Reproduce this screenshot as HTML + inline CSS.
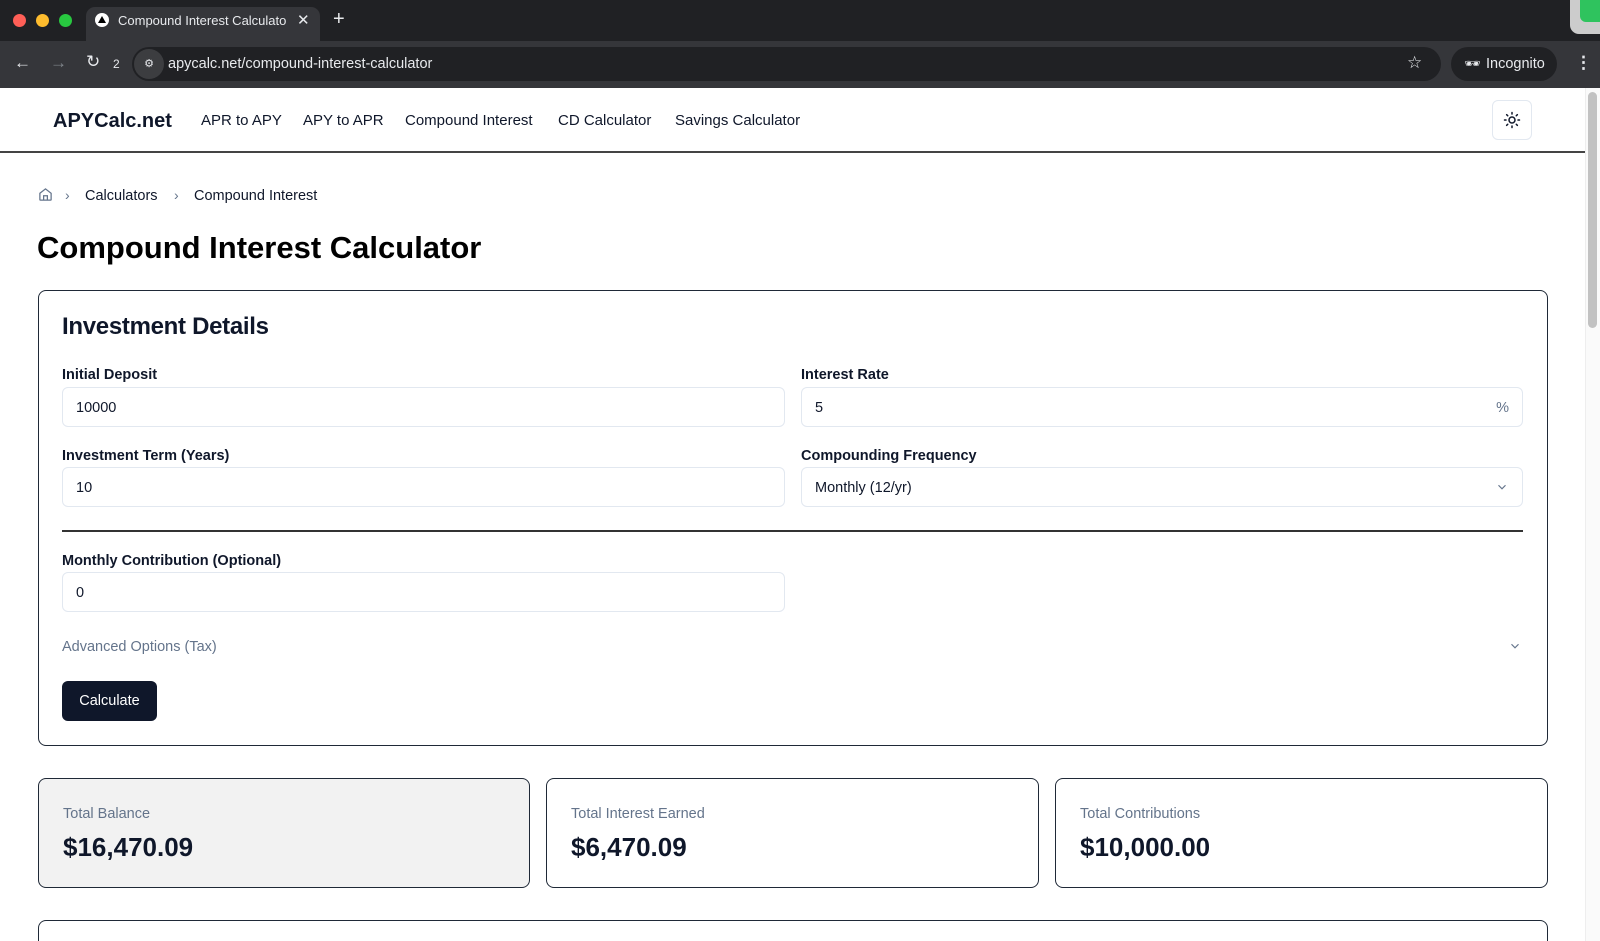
<!DOCTYPE html>
<html style="height:941px;overflow:hidden"><head><meta charset="utf-8"><style>
*{box-sizing:border-box;margin:0;padding:0}
html,body{width:1600px;height:941px;overflow:hidden}
body{background:#fff;font-family:"Liberation Sans",Arial,sans-serif;position:relative;color:#0b1120}
.a{position:absolute}
.tabbar{left:0;top:0;width:1600px;height:41px;background:#202124}
.toolbar{left:0;top:41px;width:1600px;height:47px;background:#35363a}
.lbl{font-size:14.5px;font-weight:600;color:#0f172a}
.inp{border:1px solid #e2e8f0;border-radius:6px;height:40px;font-size:14.5px;padding:12px 13px;color:#0f172a}
.stat{border:1px solid #1f2937;border-radius:8px;height:110px;top:778px}
.stat .l{position:absolute;left:24px;top:27px;font-size:14.5px;color:#64748b}
.stat .v{position:absolute;left:24px;top:53px;font-size:26px;font-weight:bold;color:#0f172a}
.nav{top:112px;font-size:15px;color:#0f172a;font-weight:500}
</style></head><body>
<div class="a tabbar"></div>
<div class="a" style="left:13px;top:14px;width:13px;height:13px;border-radius:50%;background:#ff5f57"></div>
<div class="a" style="left:36px;top:14px;width:13px;height:13px;border-radius:50%;background:#febc2e"></div>
<div class="a" style="left:59px;top:14px;width:13px;height:13px;border-radius:50%;background:#28c840"></div>
<div class="a" style="left:86px;top:7px;width:234px;height:36px;background:#35363a;border-radius:9px 9px 0 0"></div>
<div class="a" style="left:95px;top:13px;width:14px;height:14px;border-radius:50%;background:#fff"></div>
<div class="a" style="left:98px;top:16px;width:0;height:0;border-left:4px solid transparent;border-right:4px solid transparent;border-bottom:7px solid #000"></div>
<div class="a" style="left:118px;top:13px;font-size:13px;color:#e8eaed;width:168px;overflow:hidden;white-space:nowrap">Compound Interest Calculator</div>
<div class="a" style="left:297px;top:11px;font-size:15px;color:#e8eaed">✕</div>
<div class="a" style="left:333px;top:8px;font-size:20px;color:#e8eaed">+</div>
<div class="a" style="left:1570px;top:0;width:30px;height:34px;background:#ccc;border-radius:0 0 0 9px"></div>
<div class="a" style="left:1580px;top:0;width:20px;height:22px;background:#2fc35e;border-radius:0 0 0 6px"></div>
<div class="a toolbar"></div>
<div class="a" style="left:14px;top:53px;font-size:17px;color:#e8eaed">←</div>
<div class="a" style="left:50px;top:53px;font-size:17px;color:#80868b">→</div>
<div class="a" style="left:86px;top:52px;font-size:17px;color:#e8eaed">↻</div>
<div class="a" style="left:113px;top:57px;font-size:12px;color:#e8eaed">2</div>
<div class="a" style="left:132px;top:47px;width:1309px;height:34px;background:#202124;border-radius:17px"></div>
<div class="a" style="left:134px;top:49px;width:30px;height:30px;background:#3c3d40;border-radius:15px;color:#e8eaed;font-size:11px;text-align:center;line-height:30px">⚙</div>
<div class="a" style="left:168px;top:56px;font-size:14.5px;color:#e8eaed">apycalc.net/compound-interest-calculator</div>
<div class="a" style="left:1407px;top:53px;font-size:17px;color:#e8eaed">☆</div>
<div class="a" style="left:1451px;top:47px;width:106px;height:34px;background:#202124;border-radius:17px"></div>
<div class="a" style="left:1464px;top:56px;font-size:13px;color:#e8eaed">🕶</div>
<div class="a" style="left:1486px;top:56px;font-size:14.5px;color:#e8eaed">Incognito</div>
<div class="a" style="left:1575px;top:53px;font-size:17px;color:#e8eaed;font-weight:bold">⋮</div>
<div class="a" style="left:1585px;top:88px;width:15px;height:853px;background:#fafafa;border-left:1px solid #eee"></div>
<div class="a" style="left:1588px;top:92px;width:9px;height:236px;background:#c2c2c2;border-radius:5px"></div>
<div class="a" style="left:53px;top:110px;font-size:20px;font-weight:bold;color:#0f172a">APYCalc.net</div>
<div class="a nav" style="left:201px">APR to APY</div>
<div class="a nav" style="left:303px">APY to APR</div>
<div class="a nav" style="left:405px">Compound Interest</div>
<div class="a nav" style="left:558px">CD Calculator</div>
<div class="a nav" style="left:675px">Savings Calculator</div>
<div class="a" style="left:1492px;top:100px;width:40px;height:40px;border:1px solid #e2e8f0;border-radius:6px"></div>
<svg class="a" style="left:1503px;top:111px" width="18" height="18" viewBox="0 0 24 24" fill="none" stroke="#0f172a" stroke-width="2" stroke-linecap="round"><circle cx="12" cy="12" r="4"/><path d="M12 2v2M12 20v2M4.9 4.9l1.4 1.4M17.7 17.7l1.4 1.4M2 12h2M20 12h2M6.3 17.7l-1.4 1.4M19.1 4.9l-1.4 1.4"/></svg>
<div class="a" style="left:0;top:151px;width:1585px;height:1.5px;background:#444"></div>
<svg class="a" style="left:38px;top:187px" width="15" height="15" viewBox="0 0 24 24" fill="none" stroke="#64748b" stroke-width="2"><path d="M3 10l9-7 9 7v10a1 1 0 0 1-1 1H4a1 1 0 0 1-1-1z"/><path d="M9 21v-7h6v7"/></svg>
<div class="a" style="left:65px;top:187px;font-size:14px;color:#64748b">›</div>
<div class="a" style="left:85px;top:188px;font-size:14.5px;color:#0f172a">Calculators</div>
<div class="a" style="left:174px;top:187px;font-size:14px;color:#64748b">›</div>
<div class="a" style="left:194px;top:188px;font-size:14.5px;color:#0f172a">Compound Interest</div>
<div class="a" style="left:37px;top:230px;font-size:31px;font-weight:bold;color:#000">Compound Interest Calculator</div>
<div class="a" style="left:38px;top:290px;width:1510px;height:456px;border:1px solid #1f2937;border-radius:8px"></div>
<div class="a" style="left:62px;top:313px;font-size:24px;font-weight:bold;color:#0f172a;letter-spacing:-0.3px">Investment Details</div>
<div class="a lbl" style="left:62px;top:367px">Initial Deposit</div>
<div class="a inp" style="left:62px;top:387px;width:723px">10000</div>
<div class="a lbl" style="left:801px;top:367px">Interest Rate</div>
<div class="a inp" style="left:801px;top:387px;width:722px">5<span style="position:absolute;right:13px;color:#64748b">%</span></div>
<div class="a lbl" style="left:62px;top:448px">Investment Term (Years)</div>
<div class="a inp" style="left:62px;top:467px;width:723px">10</div>
<div class="a lbl" style="left:801px;top:448px">Compounding Frequency</div>
<div class="a inp" style="left:801px;top:467px;width:722px">Monthly (12/yr)</div>
<svg class="a" style="left:1495px;top:480px" width="14" height="14" viewBox="0 0 24 24" fill="none" stroke="#64748b" stroke-width="2"><path d="M6 9l6 6 6-6"/></svg>
<div class="a" style="left:62px;top:530px;width:1461px;height:1.5px;background:#333"></div>
<div class="a lbl" style="left:62px;top:553px">Monthly Contribution (Optional)</div>
<div class="a inp" style="left:62px;top:572px;width:723px">0</div>
<div class="a" style="left:62px;top:639px;font-size:14.5px;color:#64748b">Advanced Options (Tax)</div>
<svg class="a" style="left:1508px;top:639px" width="14" height="14" viewBox="0 0 24 24" fill="none" stroke="#64748b" stroke-width="2"><path d="M6 9l6 6 6-6"/></svg>
<div class="a" style="left:62px;top:681px;width:95px;height:40px;background:#0f172a;border-radius:6px;color:#fff;font-size:14.5px;font-weight:500;text-align:center;line-height:40px">Calculate</div>
<div class="a stat" style="left:38px;width:492px;background:#f2f2f2"><div class="l">Total Balance</div><div class="v">$16,470.09</div></div>
<div class="a stat" style="left:546px;width:493px"><div class="l">Total Interest Earned</div><div class="v">$6,470.09</div></div>
<div class="a stat" style="left:1055px;width:493px"><div class="l">Total Contributions</div><div class="v">$10,000.00</div></div>
<div class="a" style="left:38px;top:920px;width:1510px;height:21px;border:1px solid #1f2937;border-bottom:none;border-radius:8px 8px 0 0"></div>
</body></html>
